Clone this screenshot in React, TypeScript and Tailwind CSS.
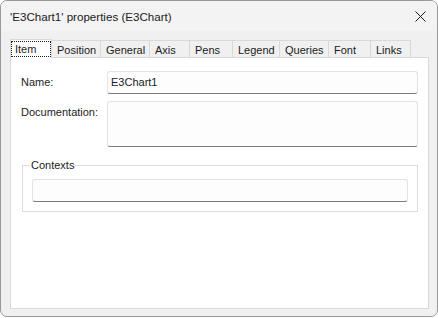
const tabs = [
  { label: "Position", w: "w-[49px]" },
  { label: "General", w: "w-[49px]" },
  { label: "Axis", w: "w-[40px]" },
  { label: "Pens", w: "w-[43px]" },
  { label: "Legend", w: "w-[47px]" },
  { label: "Queries", w: "w-[49px]" },
  { label: "Font", w: "w-[42px]" },
  { label: "Links", w: "w-[40px]" },
];

function TextBox({ className, value }: { className: string; value?: string }) {
  return (
    <div
      className={`${className} rounded-[3px] border border-[#e3e3e3] border-b-[#7a7a7a] bg-[#fdfdfd] pl-[3px] pt-[3px] text-[11px] leading-[14px] text-[#1b1b1b]`}
    >
      {value}
    </div>
  );
}

export default function App() {
  return (
    <div
      className="w-[438px] h-[318px] bg-white"
      style={{ fontFamily: '"Liberation Sans", Arial, sans-serif' }}
    >
      <div className="w-[438px] h-[317px] rounded-[7px] border border-[#9a9a9a] bg-[#f0f0f0] overflow-hidden flex flex-col">
        {/* title bar */}
        <div className="h-[30px] shrink-0 bg-[#f3f3f3] flex items-center justify-between pl-[9px] pr-[11px]">
          <span className="text-[11.6px] text-[#1b1b1b] pt-[1px]">
            'E3Chart1' properties (E3Chart)
          </span>
          <svg width="11" height="11" viewBox="0 0 11 11" className="mt-[1px]">
            <path d="M0.5 0.5 L10.5 10.5 M10.5 0.5 L0.5 10.5" stroke="#1b1b1b" strokeWidth="1" />
          </svg>
        </div>

        {/* tab strip */}
        <div className="mt-[8px] ml-[9px] flex items-end -mb-px relative z-10 text-[11px] text-[#1b1b1b]">
          <div className="w-[42px] h-[19px] bg-white border border-b-0 border-[#d9d9d9] pt-[1px]">
            <div className="h-[16px] border border-dotted border-[#222] pl-[3px] leading-[14px]">
              Item
            </div>
          </div>
          {tabs.map((t) => (
            <div
              key={t.label}
              className={`${t.w} h-[18px] border-t border-r border-b border-[#d9d9d9] bg-[#f0f0f0] pl-[5px] pt-[2px] leading-[14px]`}
            >
              {t.label}
            </div>
          ))}
        </div>

        {/* page */}
        <div className="flex-1 ml-[9px] mr-[8px] mb-[7px] border border-[#d9d9d9] bg-white pt-[13px] pl-[10px] text-[11px] text-[#1b1b1b]">
          <div className="grid grid-cols-[86px_311px] gap-y-[7px]">
            <div className="h-[23px] flex items-center">Name:</div>
            <TextBox className="h-[23px]" value="E3Chart1" />
            <div className="pt-[4px] leading-[14px]">Documentation:</div>
            <TextBox className="h-[46px]" />
          </div>

          <fieldset className="mt-[11px] ml-[1px] w-[396px] border border-[#dcdcdc] pl-[9px] pb-[9px]">
            <legend className="-ml-[2px] px-[1px] leading-[15px]">Contexts</legend>
            <TextBox className="mt-[6px] w-[376px] h-[23px]" />
          </fieldset>
        </div>
      </div>
    </div>
  );
}
